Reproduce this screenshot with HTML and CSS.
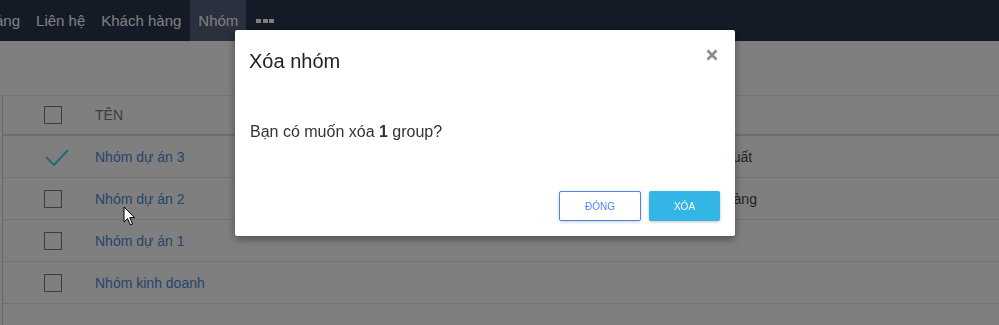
FILE: index.html
```html
<!DOCTYPE html>
<html lang="vi">
<head>
    <meta charset="UTF-8">
    <title>Nhóm</title>
    <link rel="stylesheet" href="styles.css">
</head>
<body>
    <nav class="top-nav">
        <a class="nav-item nav-first">Bảng</a>
        <a class="nav-item">Liên hệ</a>
        <a class="nav-item">Khách hàng</a>
        <a class="nav-item nav-active">Nhóm</a>
        <a class="nav-item nav-more">
            <span class="dot"></span><span class="dot"></span><span class="dot"></span>
        </a>
    </nav>
    <div class="toolbar"></div>
    <div class="group-table">
        <div class="row head-row">
            <div class="cell check-cell"><span class="checkbox"></span></div>
            <div class="cell head-text">TÊN</div>
            <div class="cell head-text"></div>
        </div>
        <div class="row">
            <div class="cell check-cell">
                <svg class="tick" width="24" height="18" viewBox="0 0 24 18">
                    <path d="M1 8 L9 16 L23 1" fill="none" stroke="#4fcdf0" stroke-width="2"/>
                </svg>
            </div>
            <div class="cell"><a class="group-link">Nhóm dự án 3</a></div>
            <div class="cell desc">Sản xuất</div>
        </div>
        <div class="row">
            <div class="cell check-cell"><span class="checkbox"></span></div>
            <div class="cell"><a class="group-link">Nhóm dự án 2</a></div>
            <div class="cell desc">Bán hàng</div>
        </div>
        <div class="row">
            <div class="cell check-cell"><span class="checkbox"></span></div>
            <div class="cell"><a class="group-link">Nhóm dự án 1</a></div>
            <div class="cell desc"></div>
        </div>
        <div class="row">
            <div class="cell check-cell"><span class="checkbox"></span></div>
            <div class="cell"><a class="group-link">Nhóm kinh doanh</a></div>
            <div class="cell desc"></div>
        </div>
    </div>

    <div class="overlay">
        <div class="modal">
            <div class="modal-header">
                <h4 class="modal-title">Xóa nhóm</h4>
                <svg class="close-icon" width="12" height="12" viewBox="0 0 12 12">
                    <path d="M1.5 1.5 L10.5 10.5 M10.5 1.5 L1.5 10.5" stroke="#8a8a8a" stroke-width="2.6"/>
                </svg>
            </div>
            <div class="modal-body">Bạn có muốn xóa <strong>1</strong> group?</div>
            <div class="modal-footer">
                <button class="btn btn-close">ĐÓNG</button>
                <button class="btn btn-delete">XÓA</button>
            </div>
        </div>
    </div>

    <svg class="cursor" width="13" height="21" viewBox="0 0 13 21">
        <path d="M1 1 L1 16 L4.5 12.5 L7.5 19 L9.5 18 L6.7 11.6 L11.5 11.6 Z" fill="#fff" stroke="#000" stroke-width="1"/>
    </svg>
</body>
</html>
```

FILE: styles.css
```css
body {
    margin: 0;
    padding: 0;
    background-color: #ffffff;
    font-family: "Liberation Sans", Arial, sans-serif;
    font-size: 14px;
    overflow: hidden;
}

.top-nav {
    height: 41px;
    display: flex;
    background-color: #28364c;
}

.nav-item {
    padding: 0 8px;
    line-height: 41px;
    color: #ffffff;
    font-size: 15px;
    white-space: nowrap;
}

.nav-first {
    margin-left: -23px;
}

.nav-active {
    padding: 0 8px;
    margin-left: 1px;
    background-color: #55607b;
}

.nav-more {
    display: flex;
    align-items: center;
    gap: 1.5px;
    padding: 0 10px;
}

.dot {
    width: 5px;
    height: 4px;
    background-color: #ffffff;
}

.toolbar {
    height: 54px;
}

.group-table {
    margin-left: 2px;
    border-left: 1px solid #d2d2d2;
    border-top: 1px solid #e8e8e8;
    height: 240px;
}

.row {
    display: grid;
    grid-template-columns: 92px 602px 1fr;
    height: 41px;
    border-bottom: 1px solid #e6e6e6;
}

.head-row {
    height: 38px;
    border-bottom: 2px solid #dadada;
}

.cell {
    display: flex;
    align-items: center;
}

.check-cell {
    padding-left: 41px;
}

.checkbox {
    width: 16px;
    height: 16px;
    border: 1px solid #7a7a7a;
}

.tick {
    margin-left: 1px;
    margin-top: 2px;
}

.head-text {
    color: #7a7a7a;
}

.group-link {
    color: #4a8ad6;
}

.desc {
    color: #444444;
}

.overlay {
    position: fixed;
    top: 0;
    left: 0;
    right: 0;
    bottom: 0;
    background-color: rgba(0, 0, 0, 0.5);
}

.modal {
    width: 500px;
    margin: 30px 0 0 235px;
    background-color: #ffffff;
    border-radius: 2px;
    box-shadow: 0 3px 8px rgba(0, 0, 0, 0.4);
}

.modal-header {
    display: flex;
    justify-content: space-between;
    align-items: flex-start;
    padding: 19px 17px 0 14px;
}

.modal-title {
    margin: 0;
    font-size: 20px;
    line-height: 24px;
    font-weight: normal;
    color: #222222;
}

.close-icon {
    margin-top: 0;
}

.modal-body {
    padding: 49px 15px 0 15px;
    font-size: 16px;
    line-height: 20px;
    color: #333333;
}

.modal-footer {
    display: flex;
    justify-content: flex-end;
    gap: 8px;
    padding: 49px 15px 15px 15px;
}

.btn {
    height: 30px;
    border-radius: 2px;
    font-family: "Liberation Sans", Arial, sans-serif;
    font-size: 10px;
    cursor: pointer;
}

.btn-close {
    width: 82px;
    background-color: #ffffff;
    color: #4a86f0;
    border: 1px solid #4a86f0;
    box-shadow: 0 1px 3px rgba(0, 0, 0, 0.2);
}

.btn-delete {
    width: 71px;
    background-color: #33b5e5;
    color: #ffffff;
    border: none;
    box-shadow: 0 1px 3px rgba(0, 0, 0, 0.25);
}

.cursor {
    position: absolute;
    left: 123px;
    top: 206px;
}
```
